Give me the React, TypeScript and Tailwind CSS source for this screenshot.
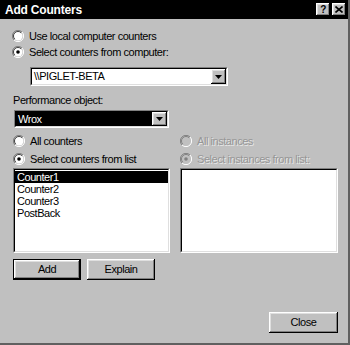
import React from 'react';

const raised =
  'shadow-[inset_-1px_-1px_0_#000,inset_1px_1px_0_#fff,inset_-2px_-2px_0_#808080,inset_2px_2px_0_#dfdfdf]';
const sunkenOuter = 'border border-t-[#808080] border-l-[#808080] border-r-white border-b-white';
const sunkenInner = 'border border-t-black border-l-black border-r-[#dfdfdf] border-b-[#dfdfdf]';

function Radio({ checked, disabled }: { checked?: boolean; disabled?: boolean }) {
  return (
    <svg width="12" height="12" viewBox="0 0 12 12" className="shrink-0">
      <path d="M10 2 A5.5 5.5 0 0 0 2 10" fill="none" stroke="#808080" strokeWidth="1" />
      <path d="M2 10 A5.5 5.5 0 0 0 10 2" fill="none" stroke="#fff" strokeWidth="1" />
      <circle cx="6" cy="6" r="4.5" fill={disabled ? '#c0c0c0' : '#fff'} />
      <path d="M9.2 2.8 A4.5 4.5 0 0 0 2.8 9.2" fill="none" stroke={disabled ? '#808080' : '#404040'} strokeWidth="1" />
      {checked && <circle cx="6" cy="6" r="1.8" fill={disabled ? '#808080' : '#000'} />}
    </svg>
  );
}

function RadioRow({
  label,
  checked,
  disabled,
  h = 'h-[18px]',
}: {
  label: string;
  checked?: boolean;
  disabled?: boolean;
  h?: string;
}) {
  return (
    <div className={`flex items-center gap-[5px] ${h}`}>
      <Radio checked={checked} disabled={disabled} />
      <span className={disabled ? 'text-[#969696] [text-shadow:1px_1px_0_#e8e8e8]' : 'text-black'}>{label}</span>
    </div>
  );
}

function DropButton() {
  return (
    <div className={`w-[15px] h-full bg-[#c0c0c0] flex items-center justify-center ${raised}`}>
      <svg width="7" height="4" viewBox="0 0 7 4">
        <path d="M0 0 H7 L3.5 4 Z" fill="#000" />
      </svg>
    </div>
  );
}

function Button({ label, isDefault, w }: { label: string; isDefault?: boolean; w: string }) {
  return (
    <div className={`${w} h-[21px] ${isDefault ? 'border border-black' : ''}`}>
      <div className={`w-full h-full bg-[#c0c0c0] flex items-center justify-center ${raised}`}>
        {label}
      </div>
    </div>
  );
}

export default function App() {
  return (
    <div
      className="w-[350px] h-[345px] bg-[#c0c0c0] border-r-2 border-b-2 border-r-[#606060] border-b-[#606060] flex flex-col text-[11px] tracking-[-0.45px] text-black overflow-hidden"
      style={{ fontFamily: '"Liberation Sans", Arial, sans-serif' }}
    >
      {/* Title bar */}
      <div className="h-[19px] bg-black flex items-center justify-between pl-[5px] pr-[2px] shrink-0">
        <span className="text-white font-bold text-[12px] tracking-[-0.2px]">Add Counters</span>
        <div className="flex gap-[2px]">
          <div className={`w-[14px] h-[13px] bg-[#c0c0c0] flex items-center justify-center font-bold text-[10px] leading-none ${raised}`}>
            ?
          </div>
          <div className={`w-[14px] h-[13px] bg-[#c0c0c0] flex items-center justify-center ${raised}`}>
            <svg width="8" height="7" viewBox="0 0 8 7">
              <path d="M0.5 0.5 L7.5 6.5 M7.5 0.5 L0.5 6.5" stroke="#000" strokeWidth="1.6" />
            </svg>
          </div>
        </div>
      </div>

      {/* Computer selection */}
      <div className="mt-[9px] pl-[12px] flex flex-col">
        <RadioRow label="Use local computer counters" h="h-[16px]" />
        <RadioRow label="Select counters from computer:" checked h="h-[16px]" />
      </div>

      <div className={`ml-[30px] mt-[7px] w-[198px] h-[19px] ${sunkenOuter}`}>
        <div className={`w-full h-full bg-white flex items-center ${sunkenInner}`}>
          <span className="flex-1 pl-[2px]">\\PIGLET-BETA</span>
          <DropButton />
        </div>
      </div>

      <div className="ml-[13px] mt-[7px] h-[14px] flex items-center">Performance object:</div>

      <div className={`ml-[14px] mt-[3px] w-[155px] h-[18px] ${sunkenOuter}`}>
        <div className={`w-full h-full bg-black flex items-center ${sunkenInner}`}>
          <span className="flex-1 pl-[2px] text-white">Wrox</span>
          <DropButton />
        </div>
      </div>

      {/* Counters / instances */}
      <div className="mt-[4px] flex">
        <div className="ml-[13px] w-[157px] flex flex-col">
          <RadioRow label="All counters" />
          <RadioRow label="Select counters from list" checked />
          <div className={`h-[85px] ${sunkenOuter}`}>
            <div className={`w-full h-full bg-white flex flex-col pt-[1px] ${sunkenInner}`}>
              <div className="h-[12px] bg-black text-white pl-[2px] leading-[12px]">Counter1</div>
              <div className="h-[12px] pl-[2px] leading-[12px]">Counter2</div>
              <div className="h-[12px] pl-[2px] leading-[12px]">Counter3</div>
              <div className="h-[12px] pl-[2px] leading-[12px]">PostBack</div>
            </div>
          </div>
        </div>
        <div className="ml-[10px] w-[158px] flex flex-col">
          <RadioRow label="All instances" disabled />
          <RadioRow label="Select instances from list:" checked disabled />
          <div className={`h-[85px] ${sunkenOuter}`}>
            <div className={`w-full h-full bg-white ${sunkenInner}`} />
          </div>
        </div>
      </div>

      <div className="ml-[13px] mt-[6px] flex gap-[6px]">
        <Button label="Add" isDefault w="w-[68px]" />
        <Button label="Explain" w="w-[68px]" />
      </div>

      <div className="mt-[32px] flex justify-end pr-[10px]">
        <Button label="Close" w="w-[69px]" />
      </div>
    </div>
  );
}
